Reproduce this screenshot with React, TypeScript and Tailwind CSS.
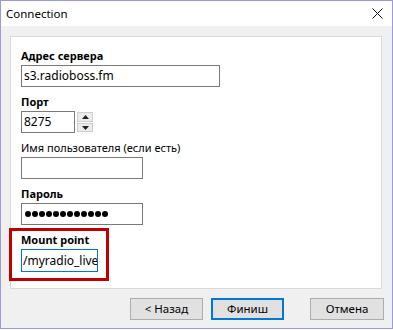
import { useState } from 'react';

const font = { fontFamily: '"Noto Sans", "Liberation Sans", sans-serif' };

function Field({ label, bold = true, children }: { label: string; bold?: boolean; children: React.ReactNode }) {
  return (
    <div className="flex flex-col">
      <div className={`h-[17px] text-[11px] leading-[16px] text-black ${bold ? 'font-bold' : ''}`}>{label}</div>
      {children}
    </div>
  );
}

function Spinner() {
  return (
    <div className="ml-[2px] mt-[1px] flex flex-col gap-[1px]">
      <div className="flex h-[10px] w-[16px] items-center justify-center border border-[#cfcfcf] bg-[#ececec]">
        <svg width="7" height="4" viewBox="0 0 7 4"><path d="M0 4 L3.5 0 L7 4 Z" fill="#222" /></svg>
      </div>
      <div className="flex h-[9px] w-[16px] items-center justify-center border border-[#cfcfcf] bg-[#ececec]">
        <svg width="7" height="4" viewBox="0 0 7 4"><path d="M0 0 L3.5 4 L7 0 Z" fill="#222" /></svg>
      </div>
    </div>
  );
}

export default function App() {
  const [server] = useState('s3.radioboss.fm');
  const [port] = useState('8275');
  const [mount] = useState('/myradio_live');

  return (
    <div className="h-[330px] w-[393px] bg-white" style={font}>
      <div className="flex h-[329px] w-[393px] flex-col border border-[#9a9ae4] bg-[#f0f0f0]">
        {/* title bar */}
        <div className="flex h-[25px] items-center justify-between bg-white pl-[5px] pr-[9px]">
          <span className="text-[11.5px] text-black">Connection</span>
          <svg width="11" height="11" viewBox="0 0 11 11">
            <path d="M0.5 0.5 L10.5 10.5 M10.5 0.5 L0.5 10.5" stroke="#111" strokeWidth="1" />
          </svg>
        </div>

        {/* content panel */}
        <div className="ml-[9px] mr-[10px] mt-[10px] h-[253px] border border-[#d9d9d9] bg-white pl-[10px] pt-[11px]">
          <div className="flex flex-col gap-[7px]">
            <Field label="Адрес сервера">
              <div className="flex h-[22px] w-[199px] items-center border border-[#7a7a7a] px-[2px] text-[12px] text-black">{server}</div>
            </Field>
            <Field label="Порт">
              <div className="flex">
                <div className="flex h-[22px] w-[54px] items-center border border-[#7a7a7a] px-[2px] text-[12px] text-black">{port}</div>
                <Spinner />
              </div>
            </Field>
            <Field label="Имя пользователя (если есть)" bold={false}>
              <div className="h-[22px] w-[122px] border border-[#7a7a7a]" />
            </Field>
            <Field label="Пароль">
              <div className="flex h-[22px] w-[122px] items-center gap-[1px] border border-[#7a7a7a] pl-[3px]">
                {Array.from({ length: 12 }).map((_, i) => (
                  <span key={i} className="h-[6px] w-[6px] rounded-full bg-black" />
                ))}
              </div>
            </Field>
          </div>

          {/* highlighted mount point */}
          <div className="-ml-[12px] mt-[3px] w-[100px] border-[3px] border-[#c00000] pb-[6px] pl-[9px] pt-[1px]">
            <Field label="Mount point">
              <div className="flex h-[23px] w-[77px] items-center overflow-hidden whitespace-nowrap border border-[#0078d7] px-[1px] text-[12px] text-black">{mount}</div>
            </Field>
          </div>
        </div>

        {/* buttons */}
        <div className="mt-[9px] flex justify-end pr-[8px] text-[11.5px] text-black">
          <button className="h-[22px] w-[73px] border border-[#adadad] bg-[#e1e1e1]">&lt; Назад</button>
          <button className="ml-[8px] h-[22px] w-[73px] border-2 border-[#0078d7] bg-[#e1e1e1]">Финиш</button>
          <button className="ml-[26px] h-[22px] w-[74px] border border-[#adadad] bg-[#e1e1e1]">Отмена</button>
        </div>
      </div>
    </div>
  );
}
